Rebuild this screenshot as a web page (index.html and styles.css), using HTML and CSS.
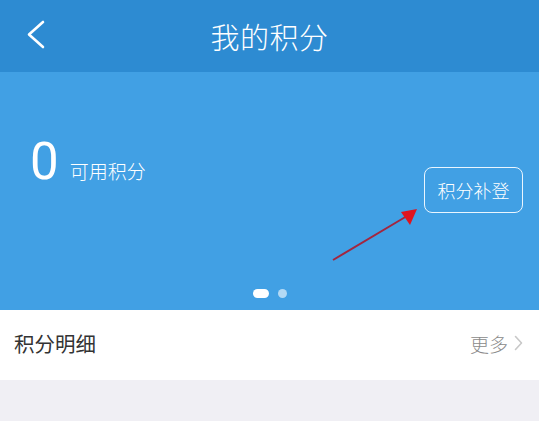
FILE: index.html
```html
<!DOCTYPE html>
<html lang="zh-CN">
<head>
<meta charset="utf-8">
<title>我的积分</title>
<link rel="stylesheet" href="styles.css">
</head>
<body>
<div class="page">
  <header class="topbar">
    <button class="back" aria-label="返回">
      <svg width="20" height="30" viewBox="0 0 20 30"><polyline points="17,2 3,14.5 17,27" fill="none" stroke="#fff" stroke-width="2.6" stroke-linecap="round" stroke-linejoin="round"/></svg>
    </button>
    <h1 class="title">我的积分</h1>
    <span class="spacer"></span>
  </header>

  <section class="hero">
    <div class="hero-main">
      <div class="balance">
        <span class="amount">0</span>
        <span class="label">可用积分</span>
      </div>
      <button class="supplement">积分补登</button>
    </div>
    <div class="dots">
      <span class="dot dot-active"></span>
      <span class="dot"></span>
    </div>
  </section>

  <div class="row">
    <span class="row-title">积分明细</span>
    <span class="row-more">更多
      <svg width="9" height="16" viewBox="0 0 9 16"><polyline points="1.5,1.5 7.5,8 1.5,14.5" fill="none" stroke="#c8c8c8" stroke-width="1.6" stroke-linecap="round" stroke-linejoin="round"/></svg>
    </span>
  </div>

  <div class="rest"></div>

  <svg class="annotation" width="539" height="421" viewBox="0 0 539 421">
    <line x1="333" y1="260" x2="407" y2="216" stroke="#a3263f" stroke-width="2"/>
    <polygon points="417,209 401,212 410,225" fill="#e0141e"/>
  </svg>
</div>
</body>
</html>
```

FILE: styles.css
```css
html, body {
  margin: 0;
  padding: 0;
}

body {
  font-family: "Noto Sans CJK SC", "Noto Sans", sans-serif;
  background: #f0eff4;
}

.page {
  position: relative;
  width: 539px;
  height: 421px;
  overflow: hidden;
  display: flex;
  flex-direction: column;
}

.topbar {
  height: 72px;
  background: #2d8bd2;
  display: grid;
  grid-template-columns: 72px 1fr 72px;
  align-items: center;
}

.back {
  border: 0;
  background: none;
  padding: 0 0 0 26px;
  margin: 0;
  display: flex;
  align-items: center;
  height: 30px;
  margin-top: -2px;
}

.title {
  margin: 0;
  text-align: center;
  color: #fff;
  font-size: 29px;
  font-weight: 300;
  letter-spacing: 0.5px;
  line-height: 1;
}

.hero {
  height: 238px;
  background: #41a0e4;
  display: flex;
  flex-direction: column;
  box-sizing: border-box;
  padding-bottom: 12px;
}

.hero-main {
  display: flex;
  justify-content: space-between;
  align-items: flex-start;
  padding: 0 16px 0 30px;
}

.balance {
  margin-top: 64px;
  display: flex;
  align-items: baseline;
  color: #fff;
}

.amount {
  font-family: Roboto, "Noto Sans", sans-serif;
  font-weight: 400;
  font-size: 51px;
  line-height: 1;
}

.label {
  font-size: 19px;
  font-weight: 300;
  margin-left: 11px;
}

.supplement {
  margin-top: 95px;
  width: 99px;
  height: 46px;
  border: 1.6px solid #eaf6ff;
  border-radius: 8px;
  background: transparent;
  color: #fff;
  font-family: "Noto Sans CJK SC", sans-serif;
  font-weight: 300;
  font-size: 18px;
  padding: 0;
}

.dots {
  margin-top: auto;
  display: flex;
  justify-content: center;
  gap: 9px;
}

.dot {
  width: 9px;
  height: 9px;
  border-radius: 4.5px;
  background: rgba(255, 255, 255, 0.6);
}

.dot-active {
  width: 16px;
  background: #fff;
}

.row {
  height: 70px;
  background: #fff;
  display: flex;
  align-items: center;
  justify-content: space-between;
  padding: 0 16px 4px 14px;
  box-sizing: border-box;
}

.row-title {
  font-size: 20.5px;
  color: #333;
}

.row-more {
  display: flex;
  align-items: center;
  gap: 6px;
  font-size: 19px;
  font-weight: 300;
  color: #8a8a8a;
}

.rest {
  flex: 1;
  background: #f0eff4;
}

.annotation {
  position: absolute;
  top: 0;
  left: 0;
  pointer-events: none;
}
```
